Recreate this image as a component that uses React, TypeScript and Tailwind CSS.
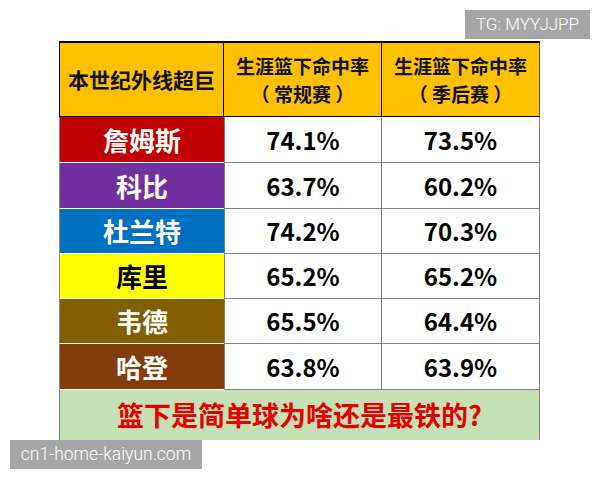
import React from "react";

const rows = [
  { name: "詹姆斯", bg: "bg-[#c00000]", fg: "text-white", a: "74.1%", b: "73.5%", h: "h-[46px]" },
  { name: "科比", bg: "bg-[#7030a0]", fg: "text-white", a: "63.7%", b: "60.2%", h: "h-[46px]" },
  { name: "杜兰特", bg: "bg-[#0070c0]", fg: "text-white", a: "74.2%", b: "70.3%", h: "h-[45px]" },
  { name: "库里", bg: "bg-[#ffff00]", fg: "text-black", a: "65.2%", b: "65.2%", h: "h-[45px]" },
  { name: "韦德", bg: "bg-[#806000]", fg: "text-white", a: "65.5%", b: "64.4%", h: "h-[45px]" },
  { name: "哈登", bg: "bg-[#843c0c]", fg: "text-white", a: "63.8%", b: "63.9%", h: "h-[46px]" },
];

const cjk = { fontFamily: '"Noto Sans CJK SC", "Noto Sans", sans-serif' };

export default function App() {
  return (
    <div className="relative w-[600px] h-[480px] bg-white overflow-hidden" style={cjk}>
      <div className="pt-[41px] pl-[59px]">
        <div className="w-[481px] border-t-2 border-black">
          {/* header */}
          <div className="grid grid-cols-[165px_158px_158px] h-[74px] bg-[#ffc000] border-b border-black">
            <div className="flex items-center justify-center border-l border-r border-black text-[21px] font-bold text-[#111] leading-none">
              本世纪外线超巨
            </div>
            <div className="flex flex-col items-center justify-center border-r border-black text-[19px] font-bold text-[#111] leading-[28px]">
              <span>生涯篮下命中率</span>
              <span className="whitespace-pre">（ 常规赛 ）</span>
            </div>
            <div className="flex flex-col items-center justify-center border-r border-[#555] text-[19px] font-bold text-[#111] leading-[28px]">
              <span>生涯篮下命中率</span>
              <span className="whitespace-pre">（ 季后赛 ）</span>
            </div>
          </div>
          {rows.map((r) => (
            <div key={r.name} className={`grid grid-cols-[165px_158px_158px] ${r.h}`}>
              <div className={`flex items-center justify-center ${r.bg} ${r.fg} border-b border-white border-l border-l-[#888] text-[26px] font-bold leading-none`}>
                {r.name}
              </div>
              <div className="flex items-center justify-center border-b border-l border-r border-[#808080] text-[24px] font-bold text-black leading-none">
                {r.a}
              </div>
              <div className="flex items-center justify-center border-b border-r border-[#808080] text-[24px] font-bold text-black leading-none">
                {r.b}
              </div>
            </div>
          ))}
          <div className="h-[50px] bg-[#c5e0b4] border-l border-r border-[#808080] flex items-center justify-center">
            <span className="text-[27px] font-bold text-[#e60000] leading-none pb-[2px]">
              篮下是简单球为啥还是最铁的?
            </span>
          </div>
        </div>
      </div>

      <div
        className="absolute left-[465px] top-[10px] w-[125px] h-[29px] bg-[#a6a6a6] flex items-center justify-center text-white text-[17px] leading-none"
        style={{ fontFamily: '"Roboto", "Liberation Sans", sans-serif', fontWeight: 300 }}
      >
        TG: MYYJJPP
      </div>
      <div
        className="absolute left-[10px] top-[440px] w-[192px] h-[29px] bg-[#a6a6a6] flex items-center justify-center text-white text-[17.5px] leading-none"
        style={{ fontFamily: '"Roboto", "Liberation Sans", sans-serif', fontWeight: 300 }}
      >
        cn1-home-kaiyun.com
      </div>
    </div>
  );
}
